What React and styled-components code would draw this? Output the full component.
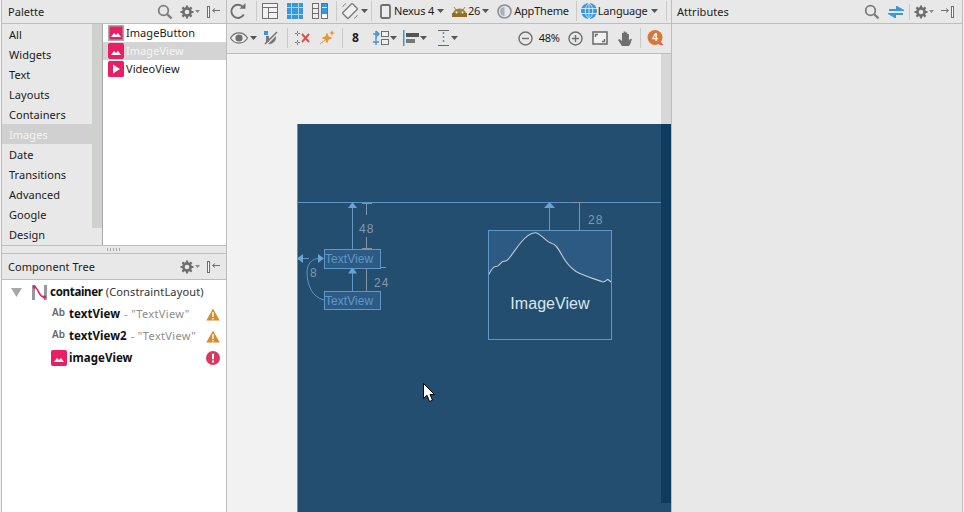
import React from 'react';
import styled, { createGlobalStyle } from 'styled-components';

const Global = createGlobalStyle`
  html, body { margin: 0; padding: 0; background: #f2f2f2; overflow: hidden; }
  #root { width: 964px; height: 512px; }
`;

const FONT = `"Noto Sans", "Open Sans", "DejaVu Sans", sans-serif`;
const PANEL = '#e8e8e8';
const LINE = '#bdbdbd';
const GREY = '#6f6f6f';
const BLUE = '#3b97dc';
const PINK = '#e91e63';

const Page = styled.div`
  width: 964px; height: 512px; display: flex; overflow: hidden; box-sizing: border-box;
  padding: 0 1px; font: 11px/16px ${FONT}; letter-spacing: .05px; color: #111; background: #f2f2f2;
`;
const LeftPanel = styled.aside`
  width: 226px; flex: none; display: flex; flex-direction: column; box-sizing: border-box;
  border-left: 1px solid ${LINE}; border-right: 1px solid ${LINE}; background: ${PANEL};
`;
const Header = styled.header`
  height: ${p => p.$h || 24}px; flex: none; box-sizing: border-box; display: flex; align-items: center;
  padding: 0 ${p => p.$pr || 6}px 0 ${p => p.$pl || 6}px; background: ${PANEL}; border-bottom: 1px solid ${LINE};
  border-top: ${p => p.$top ? `1px solid ${LINE}` : 'none'};
`;
const Title = styled.span`
  flex: 1; color: #1c1c1c;
`;
const PaletteBody = styled.div`
  height: 221px; flex: none; display: flex;
`;
const Categories = styled.div`
  width: 90px; flex: none; background: ${PANEL};
`;
const Category = styled.div`
  height: 20px; padding: 1px 0 0 7px; display: flex; align-items: center; width: 100px; box-sizing: border-box;
  color: ${p => p.$sel ? '#f4f4f4' : '#1a1a1a'};
  background: ${p => p.$sel ? '#d0d0d0' : 'transparent'};
`;
const ScrollTrack = styled.div`
  width: 10px; flex: none; background: transparent;
`;
const ScrollThumb = styled.div`
  width: 10px; height: 204px; background: #cfd1cf;
`;
const Items = styled.div`
  flex: 1; background: #fff; border-left: 1px solid #a9a9a9;
`;
const Item = styled.div`
  height: 18px; display: flex; align-items: center; gap: 2px; padding-left: 5px;
  color: ${p => p.$sel ? '#f4f4f4' : '#1a1a1a'};
  background: ${p => p.$sel ? '#d4d4d4' : 'transparent'};
`;
const Splitter = styled.div`
  height: 7px; flex: none; display: flex; align-items: center; justify-content: center;
  background: ${PANEL}; border-top: 1px solid ${LINE};
`;
const Grip = styled.span`
  width: 14px; height: 3px;
  background: repeating-linear-gradient(90deg, #a8a8a8 0 1px, transparent 1px 3px);
`;
const Tree = styled.div`
  flex: 1; background: #fff; padding-top: 1px;
`;
const Row = styled.div`
  height: 22px; display: flex; align-items: center; padding-left: ${p => p.$indent}px; padding-right: 6px;
`;
const Bold = styled.b`
  font-weight: 700; font-size: 11.5px; color: #111; margin-left: ${p => p.$ml || 0}px;
  flex: ${p => p.$grow ? 1 : 'none'};
  letter-spacing: ${p => p.$tight ? '-.3px' : '.05px'};
`;
const Muted = styled.span`
  color: #8d8d8d; margin-left: 4px; flex: 1; white-space: pre; letter-spacing: .35px;
`;
const AbTag = styled.span`
  width: 17px; font-size: 10px; color: #666; position: relative; top: -2px; flex: none; font-weight: 600;
`;
const Type = styled.span`
  color: #333; margin-left: 3px; letter-spacing: .15px;
`;
const Center = styled.main`
  width: 445px; flex: none; display: flex; flex-direction: column; box-sizing: border-box;
  border-right: 1px solid ${LINE};
`;
const ToolRow = styled.div`
  height: ${p => p.$h}px; flex: none; box-sizing: border-box; display: flex; align-items: center;
  background: ${PANEL}; border-bottom: 1px solid ${LINE}; padding-bottom: 1px;
`;
const Slot = styled.span`
  display: inline-flex; align-items: center; flex: none; margin-left: ${p => p.$ml || 0}px;
`;
const Sep = styled.i`
  width: 1px; height: ${p => p.$h || 20}px; flex: none; background: #cacaca; margin-left: ${p => p.$ml}px;
`;
const ToolText = styled.span`
  flex: none; color: #1c1c1c; margin-left: ${p => p.$ml || 0}px;
  font-weight: ${p => p.$bold ? 700 : 400};
  font-size: ${p => p.$bold ? 12 : 11}px;
  letter-spacing: -.2px;
`;
const Stage = styled.div`
  flex: 1; position: relative; overflow: hidden; background: #f2f2f2; padding: 70px 0 0 70px;
`;
const Blueprint = styled.div`
  width: 374px; height: 388px; position: relative; background: #234e70; overflow: hidden;
`;
const VBar = styled.div`
  position: absolute; right: 0; top: 0; width: 10px; height: 70px; background: #d8d8d8;
`;
const DarkBar = styled.div`
  position: absolute; right: 0; top: 0; width: 10px; height: 379px; background: #0f3b5e;
`;
const Drawing = styled.svg`
  position: absolute; left: 0; top: 0; width: 374px; height: 388px;
`;
const Node = styled.div`
  position: absolute; box-sizing: border-box; left: ${p => p.$x - 297}px; top: ${p => p.$y - 124}px;
  width: ${p => p.$w}px; height: ${p => p.$h}px; border: 1px solid #5f97c8; background: #2c5a82;
  display: flex; align-items: center; font: 12px/14px "Liberation Sans", Arial, sans-serif; color: #6097c8;
`;
const ImageNode = styled(Node)`
  background: transparent; justify-content: center; padding-top: 38px; color: #dbe6ef;
  font-size: 16px; line-height: 18px;
`;
const Dim = styled.span`
  position: absolute; left: ${p => p.$x - 297}px; top: ${p => p.$y - 124}px;
  font: 12px/14px "Liberation Sans", Arial, sans-serif; letter-spacing: 1px; color: #8398aa;
`;
const RightPanel = styled.aside`
  flex: 1; background: ${PANEL}; border-right: 1px solid ${LINE}; display: flex; flex-direction: column;
`;
const Ico = styled.svg`
  display: block; flex: none;
`;

const S = ({ w = 16, h = 16, children }) => <Ico width={w} height={h} viewBox={`0 0 ${w} ${h}`} fill="none">{children}</Ico>;
const Caret = ({ ml = 2 }) => <Slot $ml={ml}><S w={7} h={4}><path d="M0 0h7L3.5 4z" fill="#555" /></S></Slot>;
const MiniCaret = () => <Slot $ml={1}><S w={5} h={3}><path d="M0 0h5L2.5 3z" fill="#888" /></S></Slot>;

const Search = () => <S><circle cx="6.5" cy="6.5" r="4.8" stroke="#7d7d7d" strokeWidth="1.8" /><path d="M10 10l4.5 4.5" stroke="#7d7d7d" strokeWidth="2.4" /></S>;
const Gear = () => <S w={14} h={14}><circle cx="7" cy="7" r="3.6" stroke={GREY} strokeWidth="2.6" /><path d="M7 .5v3M7 10.5v3M.5 7h3M10.5 7h3M2.4 2.4l2 2M9.6 9.6l2 2M11.6 2.4l-2 2M4.4 9.6l-2 2" stroke={GREY} strokeWidth="2.2" /></S>;
const PinLeft = () => <S w={13} h={12}><rect x="0.5" y="0.5" width="2" height="11" fill="#fff" stroke={GREY} /><path d="M6 4.5h7M8 2.5l-2.5 2L8 6.5" stroke={GREY} /></S>;
const PinRight = () => <S w={13} h={12}><rect x="10.5" y="0.5" width="2" height="11" fill="#fff" stroke={GREY} /><path d="M0 4.5h7M5 2.5l2.5 2L5 6.5" stroke={GREY} /></S>;
const Img = ({ frame }) => (
  <S w={16} h={16}>
    <rect x="0.5" y="0.5" width="15" height="15" rx="1" fill={PINK} stroke={frame ? '#aaa' : PINK} strokeWidth={frame ? 2 : 1} />
    <path d="M3 12l3-4 2 2 2-2 3 4z" fill="#fff" />
  </S>
);
const Video = () => <S><rect width="16" height="16" rx="1.5" fill={PINK} /><path d="M5 3.5l7 4.5-7 4.5z" fill="#fff" /></S>;
const Warn = () => <S w={14} h={13}><path d="M7 .5L13.7 12.5H.3z" fill="#d98a2b" /><path d="M6.3 4h1.4v5H6.3zM6.3 10h1.4v1.4H6.3z" fill="#fff" /></S>;
const Err = () => <S w={14} h={14}><circle cx="7" cy="7" r="7" fill="#d63a5e" /><path d="M6 2.8h2v5.4H6zM6 9.4h2v2H6z" fill="#fff" /></S>;
const Tri = () => <S w={11} h={9}><path d="M0 0h11L5.5 9z" fill="#a8a8a8" /></S>;
const ConstraintIco = () => (
  <S w={15} h={15}>
    <rect x="0" y="0" width="3" height="15" fill="#999" /><rect x="12" y="0" width="3" height="15" fill="#999" />
    <path d="M2 2c5 0 4 10 10 10" stroke={PINK} strokeWidth="1.6" />
    <circle cx="2.5" cy="2" r="1.7" fill={PINK} /><circle cx="12.5" cy="12" r="1.7" fill={PINK} />
  </S>
);
const Refresh = () => <S w={17} h={17}><path d="M13.8 11.5A6.6 6.6 0 1 1 13 4" stroke={GREY} strokeWidth="1.9" /><path d="M9.5 5.8h6V0z" fill={GREY} /></S>;
const LayoutIco = () => <S><rect x=".5" y=".5" width="15" height="15" fill="#f2f2f2" stroke={GREY} /><path d="M1 4.5h14M6.5 4.5V15M6.5 9.5H15" stroke={GREY} /></S>;
const BlueprintIco = () => <S><rect width="16" height="16" fill={BLUE} /><path d="M4.5 0v16M11.5 0v16M0 4.5h16M0 11.5h16" stroke="#a9d6f5" /></S>;
const SplitIco = () => <S><rect x=".5" y=".5" width="6" height="15" fill="#eee" stroke={GREY} /><path d="M1 5.5h5M1 10.5h5" stroke={GREY} /><rect x="9.5" y=".5" width="6" height="15" fill="#fff" stroke={GREY} /><rect x="10" y="5" width="5" height="6" fill={BLUE} /><rect x="10" y="1" width="5" height="3" fill={BLUE} /></S>;
const Rotate = () => (
  <S w={18} h={18}><rect x="5" y="2" width="8" height="14" rx="1" transform="rotate(45 9 9)" fill="#f0f0f0" stroke="#7d7d7d" strokeWidth="1.4" /><path d="M1.5 5A8.5 8.5 0 0 1 5 1.5M16.5 13a8.5 8.5 0 0 1-3.5 3.5" stroke="#8d8d8d" /></S>
);
const Phone = () => <S w={11} h={15}><rect x="1" y="1" width="9" height="13" rx="1.5" fill="#ececec" stroke={GREY} strokeWidth="1.8" /></S>;
const Android = () => <S w={17} h={12}><path d="M1 11a7.5 7.5 0 0 1 15 0z" fill="#a8832f" /><rect x="1" y="8" width="15" height="4" fill="#8f6f28" /><path d="M3 2l2 3M14 2l-2 3" stroke="#a8832f" /><circle cx="5.5" cy="7.5" r=".9" fill="#fff" /><circle cx="11.5" cy="7.5" r=".9" fill="#fff" /></S>;
const Theme = () => <S w={15} h={15}><circle cx="7.5" cy="7.5" r="6.5" fill="#e4e8ec" stroke="#8b8f96" strokeWidth="1.6" /><path d="M7.5 3a4.5 4.5 0 0 0 0 9z" fill="#a9b0b8" /></S>;
const Globe = () => <S><circle cx="8" cy="8" r="8" fill={BLUE} /><path d="M0 5.5h16M0 10.5h16M8 0v16M8 0c-5 4-5 12 0 16M8 0c5 4 5 12 0 16" stroke="#d7edfb" strokeWidth=".9" /></S>;
const Eye = () => <S w={18} h={12}><path d="M.5 6C3 2 6 .8 9 .8S15 2 17.5 6C15 10 12 11.2 9 11.2S3 10 .5 6z" fill="#eee" stroke={GREY} strokeWidth="1.2" /><circle cx="9" cy="6" r="3.6" fill={GREY} /></S>;
const NoMargin = () => <S w={14} h={14}><rect x="0" y="0" width="4" height="4" fill={BLUE} /><path d="M1 13L13 1" stroke={GREY} strokeWidth="1.4" /><path d="M4 13a7 7 0 0 0 8-8l-8 8z" fill="#777" /><rect x="2" y="5" width="3" height="6" fill="#777" /></S>;
const ClearIco = () => <S w={16} h={16}><path d="M1 3.5h5M3.5 1v5M1 12.5h5M3.5 10v5" stroke="#7a7a7a" strokeDasharray="2 1" /><path d="M8 4l7 8M15 4l-7 8" stroke="#d9534f" strokeWidth="2" /></S>;
const Wand = () => <S w={16} h={16}><path d="M8 3.5l1.3 3.2L12.5 8 9.3 9.3 8 12.5 6.7 9.3 3.5 8l3.2-1.3zM1 14l5-4" fill="#e8952f" stroke="#e8952f" /><path d="M13 0l.8 2.2L16 3l-2.2.8L13 6l-.8-2.2L10 3l2.2-.8z" fill="#e8952f" /></S>;
const MarginIco = () => <S w={16} h={16}><rect x="8.5" y="1.5" width="7" height="5" fill="#eee" stroke={GREY} /><rect x="8.5" y="9.5" width="7" height="5" fill="#eee" stroke={GREY} /><path d="M0 4h6M3 1l3 3-3 3M0 12h6" stroke={BLUE} strokeWidth="1.4" /><path d="M3 1v14" stroke={BLUE} strokeWidth="1.4" /></S>;
const AlignIco = () => <S w={16} h={16}><rect x="0" y="0" width="1.5" height="16" fill={BLUE} /><rect x="3" y="3" width="13" height="4" fill="#555" /><rect x="3" y="9" width="9" height="4" fill="#777" /></S>;
const SpreadIco = () => <S w={11} h={16}><path d="M0 .5h11M0 15.5h11" stroke="#666" /><path d="M5.5 2v12" stroke={BLUE} strokeWidth="1.4" strokeDasharray="2 2" /></S>;
const ZoomOut = () => <S w={15} h={15}><circle cx="7.5" cy="7.5" r="6.5" stroke={GREY} strokeWidth="1.4" /><path d="M4 7.5h7" stroke={GREY} strokeWidth="1.4" /></S>;
const ZoomIn = () => <S w={15} h={15}><circle cx="7.5" cy="7.5" r="6.5" stroke={GREY} strokeWidth="1.4" /><path d="M4 7.5h7M7.5 4v7" stroke={GREY} strokeWidth="1.4" /></S>;
const Fit = () => <S w={16} h={14}><rect x="1" y="1" width="14" height="12" fill="#f2f2f2" stroke={GREY} strokeWidth="1.6" /><path d="M3.5 6V3.5H6M12.5 8v2.5H10" stroke={GREY} strokeWidth="1.4" /></S>;
const Hand = () => <S w={17} h={17}><path d="M5 16L1 10l1.5-1L5 11V3h1.6v6V1.5h1.8V9 2.5h1.8V9 4h1.7v7l1-2h2l-1.5 5-1.5 2z" fill={GREY} /></S>;
const Badge = () => <S w={17} h={16}><circle cx="8" cy="7.5" r="7.5" fill="#d9763a" /><path d="M10 13l6 2-3-5z" fill="#d9763a" /><path d="M12 14l4 1" stroke="#e04060" /><text x="8" y="11" fontSize="10" fontWeight="700" fill="#fff" textAnchor="middle" fontFamily="Liberation Sans, sans-serif">4</text></S>;
const Swap = () => <S w={16} h={12}><path d="M1 4h11M9 1l5 3-5 0z" stroke={BLUE} strokeWidth="2" /><path d="M15 8H4M7 11L2 8h5z" stroke={BLUE} strokeWidth="2" /></S>;

const categories = ['All', 'Widgets', 'Text', 'Layouts', 'Containers', 'Images', 'Date', 'Transitions', 'Advanced', 'Google', 'Design'];
const curve = 'M488.5 275C491 270 494 266 496 266.5C499 267 501 261 504 261C507 262.5 510 257 520 243.5C526 236 531 232.7 535 232.7C541 232.7 545 242 552 243.5C556 244 559 250 563 257C567 264 571 268 576 271.5C584 276 595 279 603 282C606 282 606.5 279 608 279.5L611 282';

export default function App() {
  return (
    <Page>
      <Global />
      <LeftPanel>
        <Header $pr={6}>
          <Title>Palette</Title>
          <Search />
          <Slot $ml={7}><Gear /></Slot><MiniCaret />
          <Slot $ml={7}><PinLeft /></Slot>
        </Header>
        <PaletteBody>
          <Categories>
            {categories.map(c => <Category key={c} $sel={c === 'Images'}>{c}</Category>)}
          </Categories>
          <ScrollTrack><ScrollThumb /></ScrollTrack>
          <Items>
            <Item><Img frame />ImageButton</Item>
            <Item $sel><Img />ImageView</Item>
            <Item><Video />VideoView</Item>
          </Items>
        </PaletteBody>
        <Splitter><Grip /></Splitter>
        <Header $h={27} $pr={6} $top>
          <Title>Component Tree</Title>
          <Gear /><MiniCaret />
          <Slot $ml={7}><PinLeft /></Slot>
        </Header>
        <Tree>
          <Row $indent={9}><Tri /><Slot $ml={10}><ConstraintIco /></Slot><Bold $ml={3} $tight>container</Bold><Type>(ConstraintLayout)</Type></Row>
          <Row $indent={50}><AbTag>Ab</AbTag><Bold>textView</Bold><Muted>- "TextView"</Muted><Warn /></Row>
          <Row $indent={50}><AbTag>Ab</AbTag><Bold>textView2</Bold><Muted>- "TextView"</Muted><Warn /></Row>
          <Row $indent={49}><Img /><Bold $ml={2} $grow>imageView</Bold><Err /></Row>
        </Tree>
      </LeftPanel>
      <Center>
        <ToolRow $h={24}>
          <Slot $ml={3}><Refresh /></Slot>
          <Sep $ml={9} />
          <Slot $ml={5}><LayoutIco /></Slot>
          <Slot $ml={9}><BlueprintIco /></Slot>
          <Slot $ml={9}><SplitIco /></Slot>
          <Sep $ml={8} />
          <Slot $ml={4}><Rotate /></Slot><Caret ml={2} />
          <Sep $ml={3} />
          <Slot $ml={8}><Phone /></Slot>
          <ToolText $ml={3}>Nexus 4</ToolText><Caret ml={3} />
          <Slot $ml={7}><Android /></Slot>
          <ToolText>26</ToolText><Caret ml={2} />
          <Slot $ml={8}><Theme /></Slot>
          <ToolText $ml={2}>AppTheme</ToolText>
          <Sep $ml={7} />
          <Slot $ml={4}><Globe /></Slot>
          <ToolText $ml={1}>Language</ToolText><Caret ml={3} />
          <Sep $ml={8} />
        </ToolRow>
        <ToolRow $h={30}>
          <Slot $ml={3}><Eye /></Slot><Caret ml={2} />
          <Slot $ml={7}><NoMargin /></Slot>
          <Sep $ml={9} />
          <Slot $ml={6}><ClearIco /></Slot>
          <Slot $ml={9}><Wand /></Slot>
          <Sep $ml={7} />
          <ToolText $ml={9} $bold>8</ToolText>
          <Slot $ml={14}><MarginIco /></Slot><Caret ml={1} />
          <Slot $ml={6}><AlignIco /></Slot><Caret ml={1} />
          <Slot $ml={11}><SpreadIco /></Slot><Caret ml={2} />
          <Slot $ml={60}><ZoomOut /></Slot>
          <ToolText $ml={6}>48%</ToolText>
          <Slot $ml={8}><ZoomIn /></Slot>
          <Slot $ml={9}><Fit /></Slot>
          <Slot $ml={9}><Hand /></Slot>
          <Sep $ml={6} />
          <Slot $ml={6}><Badge /></Slot>
        </ToolRow>
        <Stage>
          <VBar />
          <Blueprint>
            <Drawing viewBox="297 124 374 388" fill="none">
              <path d="M297 202.5H671M297.5 124V512" stroke="#5c94c4" />
              <path fill="#2c5a82" d={`${curve}V231H488.5Z`} />
              <path d={curve} stroke="#c2ccd6" strokeWidth="1.1" />
              <path d="M352.5 206V249M352.5 272V291M549.5 206V230M324 300C312 297 307 285 307 272C307 264 312 258 320 258.5M300 258.5H309" stroke="#5f97c8" />
              <path d="M352.5 202L357 208H348zM352.5 267L357 273.5H348zM549.5 202L555 208H544zM297 258.5L303 254V263zM324 258.5L318 254V263z" fill="#6aa2d4" />
              <path d="M366.5 203V215M366.5 237V249M362 203.5H372M362 248.5H372M366.5 268V291M381 267.5H386M579.5 203V230M573 202.5H585" stroke="#8295a6" />
            </Drawing>
            <Node $x={324} $y={249} $w={57} $h={20}>TextView</Node>
            <Node $x={324} $y={291} $w={57} $h={19}>TextView</Node>
            <ImageNode $x={488} $y={230} $w={124} $h={110}>ImageView</ImageNode>
            <Dim $x={359} $y={222}>48</Dim>
            <Dim $x={374} $y={276}>24</Dim>
            <Dim $x={310} $y={266}>8</Dim>
            <Dim $x={588} $y={213}>28</Dim>
            <DarkBar />
            <Drawing viewBox="297 124 374 388" fill="none">
              <path d="M423.5 383.5V398.5L427 395.2L429.5 401.5L432.5 400.2L430 394.5H434.5Z" fill="#fff" stroke="#000" />
            </Drawing>
          </Blueprint>
        </Stage>
      </Center>
      <RightPanel>
        <Header $pr={8} $pl={5}>
          <Title>Attributes</Title>
          <Search />
          <Slot $ml={8}><Swap /></Slot>
          <Sep $ml={5} $h={16} />
          <Slot $ml={4}><Gear /></Slot><MiniCaret />
          <Slot $ml={7}><PinRight /></Slot>
        </Header>
      </RightPanel>
    </Page>
  );
}
